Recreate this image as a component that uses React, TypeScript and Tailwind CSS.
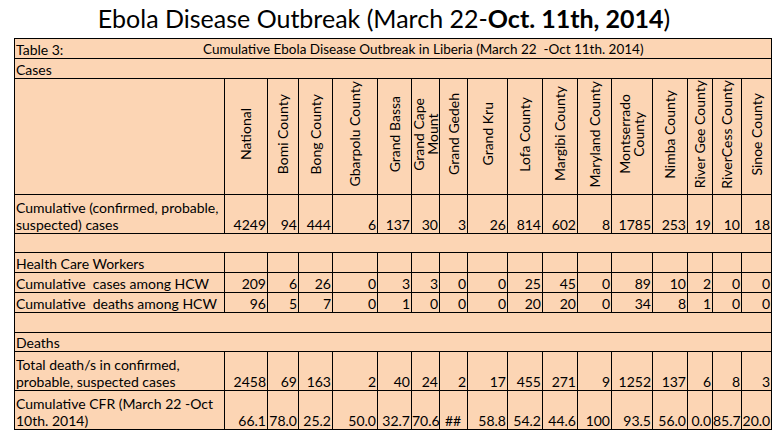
import React from 'react'

const counties = [
  { name: ['National'], w: 43, cases: '4249', hcwCases: '209', hcwDeaths: '96', deaths: '2458', cfr: '66.1' },
  { name: ['Bomi County'], w: 31, cases: '94', hcwCases: '6', hcwDeaths: '5', deaths: '69', cfr: '78.0' },
  { name: ['Bong County'], w: 34, cases: '444', hcwCases: '26', hcwDeaths: '7', deaths: '163', cfr: '25.2' },
  { name: ['Gbarpolu County'], w: 45, cases: '6', hcwCases: '0', hcwDeaths: '0', deaths: '2', cfr: '50.0' },
  { name: ['Grand Bassa'], w: 34, cases: '137', hcwCases: '3', hcwDeaths: '1', deaths: '40', cfr: '32.7' },
  { name: ['Grand Cape', 'Mount'], w: 28, cases: '30', hcwCases: '3', hcwDeaths: '0', deaths: '24', cfr: '70.6' },
  { name: ['Grand Gedeh'], w: 28, cases: '3', hcwCases: '0', hcwDeaths: '0', deaths: '2', cfr: '##' },
  { name: ['Grand Kru'], w: 40, cases: '26', hcwCases: '0', hcwDeaths: '0', deaths: '17', cfr: '58.8' },
  { name: ['Lofa County'], w: 35, cases: '814', hcwCases: '25', hcwDeaths: '20', deaths: '455', cfr: '54.2' },
  { name: ['Margibi County'], w: 35, cases: '602', hcwCases: '45', hcwDeaths: '20', deaths: '271', cfr: '44.6' },
  { name: ['Maryland County'], w: 34, cases: '8', hcwCases: '0', hcwDeaths: '0', deaths: '9', cfr: '100' },
  { name: ['Montserrado', 'County'], w: 41, cases: '1785', hcwCases: '89', hcwDeaths: '34', deaths: '1252', cfr: '93.5' },
  { name: ['Nimba County'], w: 35, cases: '253', hcwCases: '10', hcwDeaths: '8', deaths: '137', cfr: '56.0' },
  { name: ['River Gee County'], w: 25, cases: '19', hcwCases: '2', hcwDeaths: '1', deaths: '6', cfr: '0.0' },
  { name: ['RiverCess County'], w: 29, cases: '10', hcwCases: '0', hcwDeaths: '0', deaths: '8', cfr: '85.7' },
  { name: ['Sinoe County'], w: 30, cases: '18', hcwCases: '0', hcwDeaths: '0', deaths: '3', cfr: '20.0' },
]

type Key = 'cases' | 'hcwCases' | 'hcwDeaths' | 'deaths' | 'cfr'

function DataRow({ label, field, h }: { label: React.ReactNode; field: Key; h: string }) {
  return (
    <tr>
      <td className={`${h} border border-black px-[1px] align-bottom leading-[17px]`}>{label}</td>
      {counties.map((c) => (
        <td
          key={c.name.join(' ')}
          className={`${h} border border-black pr-[1px] align-bottom leading-[17px] whitespace-nowrap ${c[field] === '##' ? 'text-center' : 'text-right'}`}
        >
          {c[field]}
        </td>
      ))}
    </tr>
  )
}

function SpanRow({ children, h }: { children?: React.ReactNode; h: string }) {
  return (
    <tr>
      <td colSpan={17} className={`${h} border border-black px-[1px] align-bottom leading-[17px]`}>
        {children}
      </td>
    </tr>
  )
}

export default function App() {
  return (
    <div className="w-[782px] h-[448px] bg-white text-black font-['Lato','Open_Sans',sans-serif]">
      <div className="h-[38px] pr-[14px] pt-[3px] text-center text-[25px] leading-[30px]">
        Ebola Disease Outbreak (March 22-<b>Oct. 11th, 2014</b>)
      </div>
      <table className="ml-[14px] w-[758px] table-fixed border-collapse bg-[#fcd5b4] text-[14px]">
        <colgroup>
          <col className="w-[210px]" />
          {counties.map((c) => (
            <col key={c.name.join(' ')} style={{ width: c.w }} />
          ))}
        </colgroup>
        <tbody>
          <SpanRow h="h-[20px]">
            <div className="flex">
              <span className="w-[187px] shrink-0">Table 3:</span>
              <span className="whitespace-pre text-[13.5px]">Cumulative Ebola Disease Outbreak in Liberia (March 22  -Oct 11th. 2014)</span>
            </div>
          </SpanRow>
          <SpanRow h="h-[20px]">Cases</SpanRow>
          <tr>
            <td className="h-[116px] border border-black" />
            {counties.map((c) => (
              <td key={c.name.join(' ')} className="h-[116px] border border-black p-0 text-center align-middle">
                <div className="inline-block rotate-180 whitespace-nowrap leading-[14px] [writing-mode:vertical-rl]">
                  {c.name.map((line, i) => (
                    <React.Fragment key={line}>
                      {i > 0 && <br />}
                      {line}
                    </React.Fragment>
                  ))}
                </div>
              </td>
            ))}
          </tr>
          <DataRow
            h="h-[39px]"
            field="cases"
            label={
              <>
                Cumulative (confirmed, probable,
                <br />
                suspected) cases
              </>
            }
          />
          <SpanRow h="h-[19px]" />
          <tr>
            <td className="h-[20px] border border-black px-[1px] align-bottom leading-[17px]">Health Care Workers</td>
            {counties.map((c) => (
              <td key={c.name.join(' ')} className="h-[20px] border border-black" />
            ))}
          </tr>
          <DataRow h="h-[20px]" field="hcwCases" label={<span className="whitespace-pre">Cumulative  cases among HCW</span>} />
          <DataRow h="h-[20px]" field="hcwDeaths" label={<span className="whitespace-pre">Cumulative  deaths among HCW</span>} />
          <SpanRow h="h-[20px]" />
          <SpanRow h="h-[19px]">Deaths</SpanRow>
          <DataRow
            h="h-[39px]"
            field="deaths"
            label={
              <>
                Total death/s in confirmed,
                <br />
                probable, suspected cases
              </>
            }
          />
          <DataRow
            h="h-[39px]"
            field="cfr"
            label={
              <>
                Cumulative CFR (March 22 -Oct
                <br />
                10th. 2014)
              </>
            }
          />
        </tbody>
      </table>
    </div>
  )
}
